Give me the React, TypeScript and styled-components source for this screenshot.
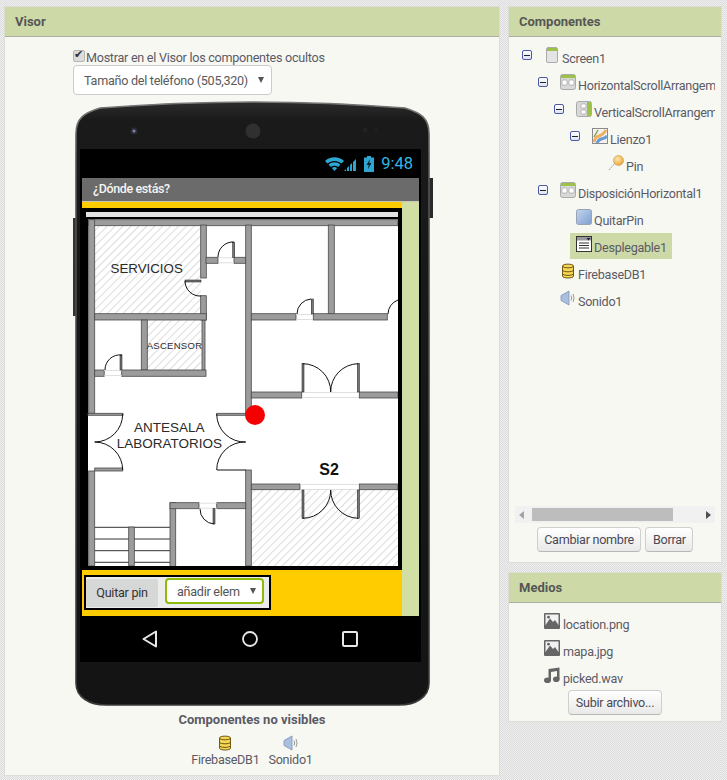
import React from "react";
import styled, { createGlobalStyle } from "styled-components";

const Global = createGlobalStyle`
  html, body { margin: 0; padding: 0; width: 727px; height: 780px; overflow: hidden; }
  body {
    font-family: Roboto, "Liberation Sans", sans-serif;
    color: #555;
    background-color: #e6e6e6;
    background-image: conic-gradient(#efefef 25%, #dcdcdc 0 50%, #efefef 0 75%, #dcdcdc 0);
    background-size: 2px 2px;
  }
`;

const Page = styled.div`
  display: flex;
  gap: 8px;
  padding: 6px 0 0 4px;
  align-items: flex-start;
`;
const Panel = styled.section<{ $w: number; $h: number }>`
  width: ${(p) => p.$w}px;
  height: ${(p) => p.$h}px;
  box-sizing: border-box;
  background: #f8f8f3;
  border: 1px solid #dcdcd8;
  display: flex;
  flex-direction: column;
`;
const PanelHead = styled.h2`
  margin: 0;
  height: 30px;
  box-sizing: border-box;
  background: #cddaa7;
  border-bottom: 1px solid #aeb0a6;
  padding: 0 10px;
  font-size: 13px;
  line-height: 29px;
  font-weight: 700;
  color: #565656;
`;
const SideColumn = styled.div`
  display: flex;
  flex-direction: column;
  gap: 9px;
`;
const VisorBody = styled.div`
  display: flex;
  flex-direction: column;
  padding-left: 68px;
`;
const CheckRow = styled.label`
  display: flex;
  align-items: flex-start;
  height: 28px;
  padding-top: 13px;
  box-sizing: border-box;
  font-size: 12.6px;
  letter-spacing: -0.27px;
  line-height: 16px;
  color: #5b5b66;
  white-space: nowrap;
`;
const Check = styled.input`
  appearance: none;
  margin: 0 1px 0 0;
  width: 12px;
  height: 12px;
  border-radius: 2px;
  background: #dcdcdc;
  border: 1px solid #b5b5b5;
  box-sizing: border-box;
  position: relative;
  &:checked::after {
    content: "✔";
    position: absolute;
    left: 0;
    top: -3px;
    font-size: 11px;
    line-height: 13px;
    color: #333;
    font-family: "DejaVu Sans", sans-serif;
  }
`;
const SizeSelect = styled.div`
  width: 199px;
  height: 30px;
  box-sizing: border-box;
  border: 1px solid #ccc;
  border-radius: 4px;
  background: #fff;
  display: flex;
  align-items: center;
  justify-content: space-between;
  padding: 0 7px 0 10px;
  font-size: 12.6px;
  letter-spacing: -0.27px;
  color: #5a5a5a;
  white-space: nowrap;
`;
const Caret = styled.span`
  flex: none;
  width: 0;
  height: 0;
  border-left: 3.5px solid transparent;
  border-right: 3.5px solid transparent;
  border-top: 6px solid #555;
`;
const Phone = styled.div`
  position: relative;
  width: 353px;
  height: 603px;
  box-sizing: border-box;
  margin: 7px 0 0 3px;
  padding: 47px 8px 43px 4px;
`;
const Bezel = styled.svg`
  position: absolute;
  left: -4px;
  top: 0;
  overflow: visible;
`;
const Screen = styled.div`
  position: relative;
  height: 513px;
  background: #000;
  display: flex;
  flex-direction: column;
`;
const StatusBar = styled.div`
  height: 29px;
  display: flex;
  align-items: center;
  justify-content: flex-end;
  padding-right: 8px;
  color: #33b5e5;
  font-size: 16.5px;
  gap: 7px;
`;
const StatusIcons = styled.svg`
  display: block;
`;
const AppForm = styled.div`
  margin: 0 2px;
  height: 438px;
  display: flex;
  flex-direction: column;
`;
const TitleBar = styled.div`
  height: 24px;
  box-sizing: border-box;
  background: #6b6b6b;
  border-bottom: 1px solid #c4c8b4;
  padding-left: 11px;
  font-size: 12.5px;
  letter-spacing: -0.38px;
  font-weight: 500;
  line-height: 21px;
  color: #f4f4f4;
`;
const FormBody = styled.div`
  flex: 1;
  display: flex;
  background: #d2dfa4;
`;
const FormColumn = styled.div`
  width: 320px;
  background: #ffcc00;
  padding-top: 6px;
  display: flex;
  flex-direction: column;
`;
const CanvasFrame = styled.div`
  width: 320px;
  height: 362px;
  box-sizing: border-box;
  border: 4px solid #000;
  background: #000;
`;
const MapDrawing = styled.svg`
  display: block;
`;
const ControlBar = styled.div`
  margin: 5px 0 0 2px;
  width: 187px;
  height: 35px;
  box-sizing: border-box;
  border: 2px solid #000;
  background: #ececec;
  display: flex;
  align-items: flex-start;
  gap: 7px;
  padding: 2px 0 0 0;
`;
const QuitButton = styled.div`
  width: 72px;
  height: 28px;
  background: #d6d8d8;
  border-radius: 2px;
  font-size: 12.6px;
  letter-spacing: -0.27px;
  line-height: 28px;
  text-align: center;
  color: #333;
`;
const PickerSelect = styled.div`
  width: 99px;
  height: 26px;
  box-sizing: border-box;
  margin-top: -1px;
  border: 2px solid #8dbb0c;
  border-radius: 4px;
  background: #fff;
  display: flex;
  align-items: center;
  justify-content: space-between;
  padding: 0 6px 0 10px;
  font-size: 12.6px;
  letter-spacing: -0.27px;
  color: #555;
  white-space: nowrap;
`;
const NavBar = styled.div`
  height: 46px;
  display: flex;
  align-items: center;
  justify-content: center;
  gap: 84px;
  padding-right: 2px;
`;
const NonVisible = styled.div`
  margin: 7px 0 0 0;
  width: 358px;
  display: flex;
  flex-direction: column;
  align-items: center;
`;
const NonVisibleTitle = styled.div`
  font-size: 13px;
  font-weight: 700;
  line-height: 16px;
  color: #5b5b66;
`;
const NonVisibleRow = styled.div`
  display: flex;
  gap: 9px;
  margin-top: 7px;
`;
const NonVisibleItem = styled.div`
  display: flex;
  flex-direction: column;
  align-items: center;
  font-size: 12.6px;
  letter-spacing: -0.27px;
  line-height: 16px;
  gap: 1px;
  color: #5b5b66;
`;
const Tree = styled.div`
  height: 469px;
  padding-top: 7px;
  box-sizing: border-box;
`;
const TreeRow = styled.div<{ $depth: number }>`
  height: 27px;
  display: flex;
  padding-left: ${(p) => 13 + p.$depth * 16}px;
  overflow: hidden;
  width: 206px;
  box-sizing: border-box;
`;
const ToggleSlot = styled.div`
  width: 22px;
  flex: none;
  padding-top: 6px;
  box-sizing: border-box;
`;
const Toggle = styled.div`
  width: 8px;
  height: 8px;
  border: 1px solid #4a5aa8;
  border-radius: 2px;
  background: linear-gradient(#fff, #dfe3f2);
  position: relative;
  &::after {
    content: "";
    position: absolute;
    left: 1px;
    right: 1px;
    top: 3.5px;
    height: 1px;
    background: #223;
  }
`;
const TreeNode = styled.div<{ $selected?: boolean }>`
  height: 26px;
  display: flex;
  flex: none;
  padding: 3px ${(p) => (p.$selected ? "5px" : "0")} 0 ${(p) => (p.$selected ? "6px" : "0")};
  margin-left: ${(p) => (p.$selected ? "-6px" : "0")};
  box-sizing: border-box;
  background: ${(p) => (p.$selected ? "#cddaa7" : "transparent")};
`;
const NodeLabel = styled.span`
  margin: 4px 0 0 2px;
  font-size: 12.6px;
  letter-spacing: -0.27px;
  line-height: 16px;
  color: #5b5b66;
  white-space: nowrap;
`;
const ScrollBar = styled.div`
  margin: 0 0 0 6px;
  width: 200px;
  height: 17px;
  background: #f1f1f1;
  display: flex;
  align-items: center;
  justify-content: space-between;
  padding: 0 4px;
  box-sizing: border-box;
  position: relative;
`;
const ScrollThumb = styled.div`
  position: absolute;
  left: 17px;
  top: 2px;
  width: 141px;
  height: 13px;
  background: #bdbdbd;
`;
const ArrowLeft = styled.span`
  border-right: 5px solid #a3a3a3;
  border-top: 4px solid transparent;
  border-bottom: 4px solid transparent;
`;
const ArrowRight = styled.span`
  border-left: 5px solid #505050;
  border-top: 4px solid transparent;
  border-bottom: 4px solid transparent;
`;
const ButtonRow = styled.div<{ $top: number }>`
  display: flex;
  justify-content: center;
  gap: 4px;
  margin-top: ${(p) => p.$top}px;
`;
const GwtButton = styled.div`
  height: 25px;
  box-sizing: border-box;
  padding: 0 6.5px;
  border: 1px solid #cfcfcf;
  border-bottom-color: #b8b8b8;
  border-radius: 4px;
  background: linear-gradient(#ffffff, #e9e9e9);
  font-size: 12.6px;
  letter-spacing: -0.27px;
  line-height: 23px;
  color: #4a4a55;
  white-space: nowrap;
`;
const MediaList = styled.div`
  padding: 10px 0 0 35px;
`;
const MediaRow = styled.div`
  display: flex;
  height: 27px;
  align-items: flex-start;
`;
const MediaName = styled.span`
  margin: 4px 0 0 3px;
  font-size: 12.6px;
  letter-spacing: -0.27px;
  line-height: 16px;
  color: #5b5b66;
`;

const ScreenIcon = () => (
  <svg width="16" height="16" viewBox="0 0 16 16">
    <rect x="2.5" y="0.5" width="11" height="15" rx="1.5" fill="#e4e4e4" stroke="#aaa" />
    <rect x="3" y="1" width="10" height="3" fill="#9cc24a" />
  </svg>
);
const HorizontalIcon = () => (
  <svg width="16" height="16" viewBox="0 0 16 16">
    <rect x="0.5" y="0.5" width="15" height="15" rx="2" fill="#d8d8d8" stroke="#aaa" />
    <rect x="1" y="1" width="14" height="3" fill="#9cc24a" />
    <rect x="2" y="6" width="5" height="5" rx="1" fill="#fff" stroke="#999" strokeWidth=".6" />
    <rect x="9" y="6" width="5" height="5" rx="1" fill="#fff" stroke="#999" strokeWidth=".6" />
  </svg>
);
const VerticalIcon = () => (
  <svg width="16" height="16" viewBox="0 0 16 16">
    <rect x="0.5" y="0.5" width="15" height="15" rx="2" fill="#d8d8d8" stroke="#aaa" />
    <rect x="11" y="1" width="4" height="14" fill="#9cc24a" />
    <rect x="5" y="3" width="5" height="4" rx="1" fill="#fff" stroke="#999" strokeWidth=".6" />
    <rect x="5" y="9" width="5" height="4" rx="1" fill="#fff" stroke="#999" strokeWidth=".6" />
  </svg>
);
const CanvasIcon = () => (
  <svg width="16" height="16" viewBox="0 0 16 16">
    <rect x="0.5" y="0.5" width="15" height="15" fill="#f2f2f2" stroke="#8a8a8a" />
    <path d="M2 14 C5 4 8 12 14 2" fill="none" stroke="#f0b060" strokeWidth="3" />
    <path d="M5 15 C8 8 11 13 15 8" fill="none" stroke="#6a9ad0" strokeWidth="3" />
    <path d="M2 9 L6 2" fill="none" stroke="#8aa04a" strokeWidth="1.5" />
  </svg>
);
const PinIcon = () => (
  <svg width="16" height="16" viewBox="0 0 16 16">
    <path d="M1 15 L8 7" stroke="#999" strokeWidth="1" strokeDasharray="2 1" />
    <defs>
      <radialGradient id="ballGrad" cx=".4" cy=".35" r=".7">
        <stop offset="0" stopColor="#fde9a8" />
        <stop offset="1" stopColor="#e8a23a" />
      </radialGradient>
    </defs>
    <circle cx="10.5" cy="5.5" r="5" fill="url(#ballGrad)" stroke="#c98a2a" strokeWidth=".5" />
  </svg>
);
const ButtonIcon = () => (
  <svg width="16" height="16" viewBox="0 0 16 16">
    <defs>
      <linearGradient id="btnGrad" x1="0" y1="0" x2="1" y2="1">
        <stop offset="0" stopColor="#c5d6ee" />
        <stop offset="1" stopColor="#7d9fd0" />
      </linearGradient>
    </defs>
    <rect x="0.5" y="0.5" width="15" height="15" rx="2" fill="url(#btnGrad)" stroke="#9aa3b5" />
  </svg>
);
const PickerIcon = () => (
  <svg width="16" height="16" viewBox="0 0 16 16">
    <rect x="0.5" y="0.5" width="15" height="15" fill="#fff" stroke="#333" />
    <rect x="1" y="1" width="14" height="3.5" fill="#999" />
    <path d="M10.5 2 h4 l-2 2.5z" fill="#124" />
    <path d="M3 7 h10 M3 9.5 h10 M3 12 h10" stroke="#333" />
  </svg>
);
const DbIcon = () => (
  <svg width="16" height="16" viewBox="0 0 16 16">
    <path d="M2.5 3 C2.5 .5 13.5 .5 13.5 3 V13 C13.5 15.7 2.5 15.7 2.5 13 Z" fill="#f6d653" stroke="#6d5a18" />
    <path d="M2.5 3 C2.5 5.4 13.5 5.4 13.5 3 M2.5 7 C2.5 9.4 13.5 9.4 13.5 7 M2.5 10.5 C2.5 13 13.5 13 13.5 10.5" fill="none" stroke="#6d5a18" />
  </svg>
);
const SoundIcon = () => (
  <svg width="16" height="16" viewBox="0 0 16 16">
    <path d="M1 5.5 L9 1 V15 L1 10.5 Z" fill="#a9bfe0" stroke="#7f93b8" strokeWidth=".8" />
    <path d="M11 5.5 Q12.5 8 11 10.5 M13 4 Q15.2 8 13 12" fill="none" stroke="#999" strokeWidth="1" />
  </svg>
);
const ImageIcon = () => (
  <svg width="16" height="16" viewBox="0 0 16 16">
    <rect width="16" height="16" rx="1" fill="#666" />
    <rect x="1.5" y="1.5" width="13" height="10.5" fill="#f2f2f2" />
    <path d="M1.5 12 L6 5.5 L9 9 L11 7 L14.5 12 Z" fill="#666" />
    <circle cx="4.5" cy="4.2" r="1.4" fill="#666" />
  </svg>
);
const MusicIcon = () => (
  <svg width="16" height="16" viewBox="0 0 16 16">
    <path d="M4.5 2 L15.5 0.5 V12 H13 V4 L7 5 V14 H4.5 Z" fill="#666" />
    <ellipse cx="3.5" cy="13.2" rx="3.5" ry="2.8" fill="#666" />
    <ellipse cx="12.3" cy="12.2" rx="3.3" ry="2.8" fill="#666" />
  </svg>
);

const WALL = "#9c9c9c";
const EDGE = "#4a4a4a";
type R = [number, number, number, number];
const walls: R[] = [
  [88.7, 219.7, 309.3, 6],
  [88.7, 219.7, 6, 193.6],
  [88.7, 471, 6, 95],
  [200.7, 225, 5.6, 53],
  [200.7, 295.7, 5.6, 24.3],
  [202, 320, 3, 50],
  [94.7, 313.7, 111.6, 6.3],
  [141.3, 320, 6, 50],
  [94.7, 370, 9.5, 6.3],
  [121.7, 370, 84.3, 6.3],
  [206, 257.3, 12, 6],
  [234, 257.3, 11.7, 6],
  [245.7, 225, 5.6, 188],
  [245.7, 470, 5.6, 96],
  [328.3, 225, 6, 89],
  [251.3, 313.7, 44.7, 6.3],
  [313.3, 313.7, 74, 6.3],
  [251.3, 392, 50.4, 6],
  [359.3, 392, 38.7, 6],
  [251.3, 484, 48.7, 5.7],
  [359.3, 484, 38.7, 5.7],
  [170, 502.7, 5.7, 64],
  [170, 502.7, 29, 6],
  [216.7, 502.7, 29, 6],
  [128.7, 527, 5.6, 39],
  [88, 413.3, 35, 2],
  [216.7, 413.3, 29, 2],
  [94.7, 468, 28, 3],
];
const hatches: R[] = [
  [94.7, 225.7, 106, 88],
  [147.3, 320, 53.4, 50],
  [251.3, 489.7, 146.7, 76.3],
];
const doors = [
  "M122 355 A15 15 0 0 0 105 370",
  "M234 242 A15 15 0 0 0 218 257",
  "M311 299 A15 15 0 0 0 297 314",
  "M398 300 A15 15 0 0 0 388 314",
  "M185 281 A15 15 0 0 0 201 296",
  "M302.7 363.7 A28 28 0 0 1 330.7 392",
  "M358.3 363.7 A28 28 0 0 0 330.7 392",
  "M302.7 518.3 A28 28 0 0 0 330.7 490",
  "M358.3 518.3 A28 28 0 0 1 330.7 490",
  "M122.7 414 A28 28 0 0 1 94.7 442",
  "M94.7 442 A28 28 0 0 1 122.7 470",
  "M216.7 414 A28 28 0 0 0 245.7 442",
  "M245.7 442 A28 28 0 0 0 216.7 470",
  "M200 508.7 A15 15 0 0 0 214 524",
  "M217 470 H246",
];
const jambs = [
  "M302 392.5 H359",
  "M302 397.5 H359",
  "M300 484.5 H359",
  "M300 489.5 H359",
  "M296 314.5 H313",
  "M296 319.5 H313",
  "M104 370.5 H122",
  "M104 375.5 H122",
  "M218 257.8 H234",
  "M218 262.8 H234",
  "M199 503.2 H217",
  "M199 508.2 H217",
];
const leaves: R[] = [
  [120, 355, 2, 15],
  [232.7, 242.3, 2, 15],
  [311.3, 299, 2, 15],
  [302, 363.7, 2, 28.3],
  [357.4, 363.7, 2, 28.3],
  [302, 490, 2, 28.3],
  [357.4, 490, 2, 28.3],
  [213, 508.7, 2, 15.3],
  [185, 280, 16, 2],
];
const stairs = [527.3, 539, 550.7, 562.3];

const FloorPlan = () => (
  <MapDrawing width="312" height="354" viewBox="86 212 312 354">
    <defs>
      <pattern id="hatch" width="5.6" height="5.6" patternUnits="userSpaceOnUse" patternTransform="rotate(45)">
        <rect width="5.6" height="5.6" fill="#fff" />
        <rect width="1" height="5.6" fill="#dcdcdc" />
      </pattern>
    </defs>
    <rect x="86" y="212" width="312" height="354" fill="#000" />
    <rect x="86" y="212" width="312" height="5" fill="#e2e2e2" />
    <rect x="88" y="219" width="310" height="347" fill="#fff" />
    {hatches.map(([x, y, w, h]) => (
      <rect key={`${x}-${y}`} x={x} y={y} width={w} height={h} fill="url(#hatch)" />
    ))}
    {stairs.map((y) => (
      <path key={y} d={`M94.7 ${y} H170`} stroke="#333" strokeWidth="1" />
    ))}
    {walls.map(([x, y, w, h]) => (
      <rect key={`${x}-${y}-${w}`} x={x} y={y} width={w} height={h} fill={WALL} stroke={EDGE} strokeWidth=".8" />
    ))}
    {jambs.map((d) => (
      <path key={d} d={d} fill="none" stroke="#d8d8d8" strokeWidth=".8" />
    ))}
    {leaves.map(([x, y, w, h]) => (
      <rect key={`${x}-${y}-l`} x={x} y={y} width={w} height={h} fill="#777" stroke="#111" strokeWidth=".5" />
    ))}
    {doors.map((d) => (
      <path key={d} d={d} fill="none" stroke="#111" strokeWidth="1" />
    ))}
    <g fontFamily="'Liberation Sans', sans-serif" fill="#2a2a2a" textAnchor="middle">
      <text x="146.7" y="272.7" fontSize="13.3">SERVICIOS</text>
      <text x="174.5" y="349" fontSize="9.5" letterSpacing=".3">ASCENSOR</text>
      <text x="169.3" y="431.7" fontSize="13.5">ANTESALA</text>
      <text x="169.3" y="448" fontSize="13.5">LABORATORIOS</text>
      <text x="329" y="475" fontSize="16" fontWeight="700" fill="#111">S2</text>
    </g>
    <circle cx="255" cy="415" r="10" fill="#f50000" />
  </MapDrawing>
);

const PhoneBody = () => (
  <Bezel width="361" height="603" viewBox="-4 0 361 603">
    <defs>
      <linearGradient id="rim" x1="0" y1="0" x2="0" y2="1">
        <stop offset="0" stopColor="#777" />
        <stop offset=".1" stopColor="#555" />
        <stop offset="1" stopColor="#3a3a3a" />
      </linearGradient>
      <linearGradient id="shell" x1="0" y1="0" x2="0" y2="1">
        <stop offset="0" stopColor="#2c2c2c" />
        <stop offset=".03" stopColor="#1a1a1a" />
        <stop offset="1" stopColor="#141414" />
      </linearGradient>
    </defs>
    <rect x="-3" y="116" width="4" height="98" fill="#333" />
    <rect x="352" y="76" width="5" height="40" fill="#2a2a2a" />
    <path
      d="M0 32 C0 16 8 11 24 6 Q176 -6 329 6 C345 11 353 16 353 32 L353 581 C353 595 340 603 323 603 L30 603 C13 603 0 595 0 581 Z"
      fill="url(#shell)"
      stroke="url(#rim)"
      strokeWidth="1.6"
    />
    <circle cx="58" cy="29" r="3.5" fill="#2b2b33" />
    <circle cx="58" cy="29" r="1.5" fill="#7f86b0" />
    <circle cx="177" cy="29" r="7.5" fill="#303030" />
    <circle cx="289" cy="28" r="2.5" fill="#222" />
    <circle cx="300" cy="28" r="1.5" fill="#222" />
  </Bezel>
);

const treeData: { depth: number; name: string; icon: React.ReactNode; toggle?: boolean; selected?: boolean }[] = [
  { depth: 0, name: "Screen1", icon: <ScreenIcon />, toggle: true },
  { depth: 1, name: "HorizontalScrollArrangement1", icon: <HorizontalIcon />, toggle: true },
  { depth: 2, name: "VerticalScrollArrangement1", icon: <VerticalIcon />, toggle: true },
  { depth: 3, name: "Lienzo1", icon: <CanvasIcon />, toggle: true },
  { depth: 4, name: "Pin", icon: <PinIcon /> },
  { depth: 1, name: "DisposiciónHorizontal1", icon: <HorizontalIcon />, toggle: true },
  { depth: 2, name: "QuitarPin", icon: <ButtonIcon /> },
  { depth: 2, name: "Desplegable1", icon: <PickerIcon />, selected: true },
  { depth: 1, name: "FirebaseDB1", icon: <DbIcon /> },
  { depth: 1, name: "Sonido1", icon: <SoundIcon /> },
];

export default function App() {
  return (
    <>
      <Global />
      <Page>
        <Panel $w={496} $h={770}>
          <PanelHead>Visor</PanelHead>
          <VisorBody>
            <CheckRow>
              <Check type="checkbox" defaultChecked />
              Mostrar en el Visor los componentes ocultos
            </CheckRow>
            <SizeSelect>
              Tamaño del teléfono (505,320)
              <Caret />
            </SizeSelect>
            <Phone>
              <PhoneBody />
              <Screen>
                <StatusBar>
                  <StatusIcons width="32" height="16" viewBox="0 0 32 16">
                    <path d="M0 5 C5 0 14 0 19 5 L16.5 7.5 C12.5 4 6.5 4 2.5 7.5 Z" fill="#2fa6d2" />
                    <path d="M3.6 8.6 C7 5.6 12 5.6 15.4 8.6 L13.2 11 C10.8 9.2 8.2 9.2 5.8 11 Z" fill="#2fa6d2" />
                    <path d="M6.8 12 C8.5 10.8 10.5 10.8 12.2 12 L9.5 15 Z" fill="#2fa6d2" />
                    <path d="M19 15 L21 13 V15 Z M22 15 V12 L24 10 V15 Z M25 15 V9 L27 7 V15 Z M28 15 V6 L31 3 V15 Z" fill="#2fa6d2" />
                  </StatusIcons>
                  <StatusIcons width="10" height="16" viewBox="0 0 10 16">
                    <path d="M3 0 H7 V1.5 H10 V16 H0 V1.5 H3 Z" fill="#2fa6d2" />
                    <path d="M6 3 L2.5 9 H4.7 L3.8 13.5 L7.5 7 H5.3 Z" fill="#06222c" />
                  </StatusIcons>
                  <span>9:48</span>
                </StatusBar>
                <AppForm>
                  <TitleBar>¿Dónde estás?</TitleBar>
                  <FormBody>
                    <FormColumn>
                      <CanvasFrame>
                        <FloorPlan />
                      </CanvasFrame>
                      <ControlBar>
                        <QuitButton>Quitar pin</QuitButton>
                        <PickerSelect>
                          añadir elem
                          <Caret />
                        </PickerSelect>
                      </ControlBar>
                    </FormColumn>
                  </FormBody>
                </AppForm>
                <NavBar>
                  <svg width="16" height="18" viewBox="0 0 16 18">
                    <path d="M14 1.5 V16.5 L1.5 9 Z" fill="none" stroke="#e8e8e8" strokeWidth="2" strokeLinejoin="round" />
                  </svg>
                  <svg width="16" height="16" viewBox="0 0 16 16">
                    <circle cx="8" cy="8" r="7" fill="none" stroke="#e8e8e8" strokeWidth="1.8" />
                  </svg>
                  <svg width="16" height="16" viewBox="0 0 16 16">
                    <rect x="1" y="1" width="14" height="14" rx="1.2" fill="none" stroke="#e8e8e8" strokeWidth="2" />
                  </svg>
                </NavBar>
              </Screen>
            </Phone>
            <NonVisible>
              <NonVisibleTitle>Componentes no visibles</NonVisibleTitle>
              <NonVisibleRow>
                <NonVisibleItem>
                  <DbIcon />
                  FirebaseDB1
                </NonVisibleItem>
                <NonVisibleItem>
                  <SoundIcon />
                  Sonido1
                </NonVisibleItem>
              </NonVisibleRow>
            </NonVisible>
          </VisorBody>
        </Panel>
        <SideColumn>
          <Panel $w={214} $h={557}>
            <PanelHead>Componentes</PanelHead>
            <Tree>
              {treeData.map((n) => (
                <TreeRow key={n.name} $depth={n.depth}>
                  <ToggleSlot>{n.toggle && <Toggle />}</ToggleSlot>
                  <TreeNode $selected={n.selected}>
                    {n.icon}
                    <NodeLabel>{n.name}</NodeLabel>
                  </TreeNode>
                </TreeRow>
              ))}
            </Tree>
            <ScrollBar>
              <ArrowLeft />
              <ScrollThumb />
              <ArrowRight />
            </ScrollBar>
            <ButtonRow $top={4}>
              <GwtButton>Cambiar nombre</GwtButton>
              <GwtButton>Borrar</GwtButton>
            </ButtonRow>
          </Panel>
          <Panel $w={214} $h={150}>
            <PanelHead>Medios</PanelHead>
            <MediaList>
              <MediaRow>
                <ImageIcon />
                <MediaName>location.png</MediaName>
              </MediaRow>
              <MediaRow>
                <ImageIcon />
                <MediaName>mapa.jpg</MediaName>
              </MediaRow>
              <MediaRow>
                <MusicIcon />
                <MediaName>picked.wav</MediaName>
              </MediaRow>
            </MediaList>
            <ButtonRow $top={-4}>
              <GwtButton>Subir archivo...</GwtButton>
            </ButtonRow>
          </Panel>
        </SideColumn>
      </Page>
    </>
  );
}
